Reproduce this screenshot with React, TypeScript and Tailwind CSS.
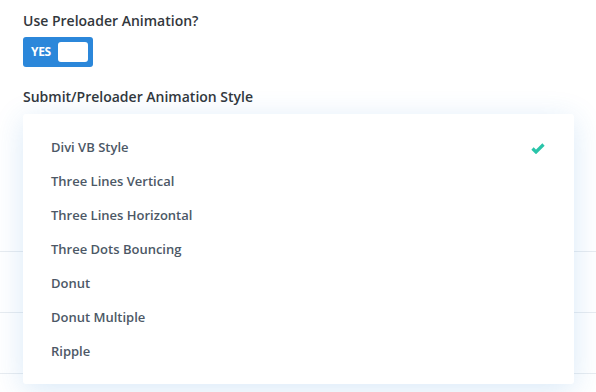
import React from "react";

const options = [
  "Divi VB Style",
  "Three Lines Vertical",
  "Three Lines Horizontal",
  "Three Dots Bouncing",
  "Donut",
  "Donut Multiple",
  "Ripple",
];

export default function App() {
  return (
    <div
      className="relative w-[596px] h-[392px] overflow-hidden bg-white text-[#32373c]"
      style={{ fontFamily: '"Open Sans", "Liberation Sans", sans-serif' }}
    >
      <div className="px-[23px] pt-[11px]">
        <div className="text-[14px] font-semibold leading-[20px]">Use Preloader Animation?</div>
        <div className="mt-[6px] flex h-[30px] w-[70px] items-center rounded-[3px] bg-[#2b87da] pl-[8px] pr-[5px]">
          <span className="text-[12px] font-bold leading-none tracking-[-0.3px] text-white">YES</span>
          <span className="ml-auto h-[20px] w-[30px] rounded-[3px] bg-white" />
        </div>
        <div className="mt-[20px] text-[14px] font-semibold leading-[20px]">
          Submit/Preloader Animation Style
        </div>
      </div>

      {/* settings rows underneath the open menu */}
      <div className="mt-[144px]">
        <div className="h-[61px] border-t border-[#e8ecf0]" />
        <div className="h-[61px] border-t border-[#e8ecf0]" />
        <div className="h-[61px] border-t border-[#e8ecf0]" />
      </div>

      {/* open dropdown menu */}
      <div className="absolute left-[23px] top-[114px] w-[551px] rounded-[3px] bg-white pt-[17px] pb-[15px] shadow-[0_6px_30px_0_rgba(43,135,218,0.18)]">
        {options.map((o, i) => (
          <div
            key={o}
            className="flex h-[34px] items-center pl-[28px] pr-[29px] text-[13px] font-semibold text-[#4c5866]"
          >
            <span>{o}</span>
            {i === 0 && (
              <svg className="ml-auto" width="14" height="11" viewBox="0 0 14 11">
                <polyline
                  points="1.5,5.5 5,9 12.5,1.5"
                  fill="none"
                  stroke="#29c4a9"
                  strokeWidth="3.2"
                  strokeLinejoin="miter"
                />
              </svg>
            )}
          </div>
        ))}
      </div>
    </div>
  );
}
